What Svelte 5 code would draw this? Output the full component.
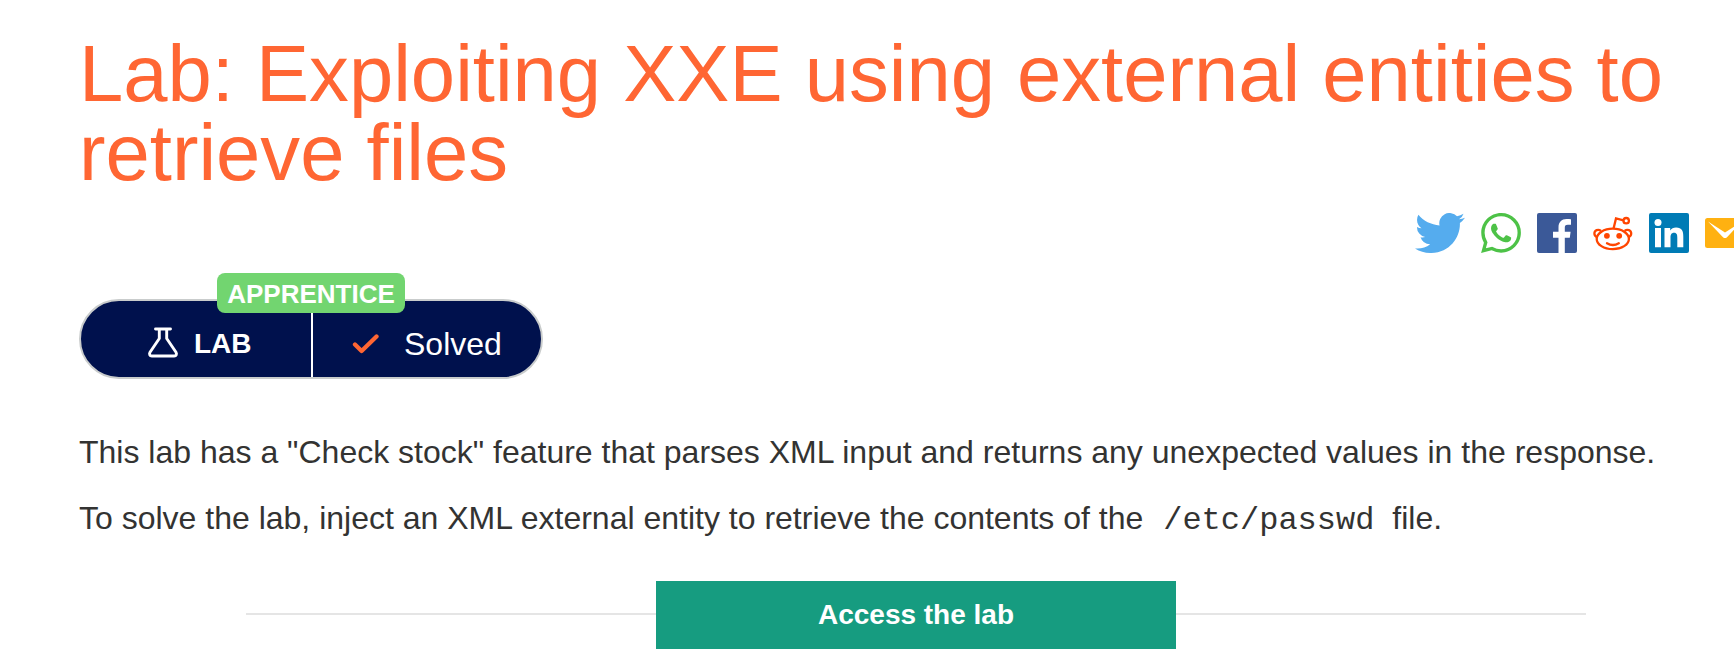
<script>
  const title = 'Lab: Exploiting XXE using external entities to retrieve files';
</script>

<main>
  <h1>{title}</h1>

  <div class="share">
    <svg class="twitter" viewBox="0 2.25 24 19.5" preserveAspectRatio="none" aria-label="Twitter"><path fill="#55acee" d="M23.953 4.57a10 10 0 01-2.825.775 4.958 4.958 0 002.163-2.723c-.951.555-2.005.959-3.127 1.184a4.92 4.92 0 00-8.384 4.482C7.69 8.095 4.067 6.13 1.64 3.162a4.822 4.822 0 00-.666 2.475c0 1.71.87 3.213 2.188 4.096a4.904 4.904 0 01-2.228-.616v.06a4.923 4.923 0 003.946 4.827 4.996 4.996 0 01-2.212.085 4.936 4.936 0 004.604 3.417 9.867 9.867 0 01-6.102 2.105c-.39 0-.779-.023-1.17-.067a13.995 13.995 0 007.557 2.209c9.053 0 13.998-7.496 13.998-13.985 0-.21 0-.42-.015-.63A9.935 9.935 0 0024 4.59z"/></svg>
    <svg viewBox="0 0 24 24" aria-label="WhatsApp"><path fill="#4dc247" d="M17.472 14.382c-.297-.149-1.758-.867-2.03-.967-.273-.099-.471-.148-.67.15-.197.297-.767.966-.94 1.164-.173.199-.347.223-.644.075-.297-.15-1.255-.463-2.39-1.475-.883-.788-1.48-1.761-1.653-2.059-.173-.297-.018-.458.13-.606.134-.133.298-.347.446-.52.149-.174.198-.298.298-.497.099-.198.05-.371-.025-.52-.075-.149-.669-1.612-.916-2.207-.242-.579-.487-.5-.669-.51-.173-.008-.371-.01-.57-.01-.198 0-.52.074-.792.372-.272.297-1.04 1.016-1.04 2.479 0 1.462 1.065 2.875 1.213 3.074.149.198 2.096 3.2 5.077 4.487.709.306 1.262.489 1.694.625.712.227 1.36.195 1.871.118.571-.085 1.758-.719 2.006-1.413.248-.694.248-1.289.173-1.413-.074-.124-.272-.198-.57-.347m-5.421 7.403h-.004a9.87 9.87 0 01-5.031-1.378l-.361-.214-3.741.982.998-3.648-.235-.374a9.86 9.86 0 01-1.51-5.26c.001-5.45 4.436-9.884 9.888-9.884 2.64 0 5.122 1.03 6.988 2.898a9.825 9.825 0 012.893 6.994c-.003 5.45-4.437 9.884-9.885 9.884m8.413-18.297A11.815 11.815 0 0012.05 0C5.495 0 .16 5.335.157 11.892c0 2.096.547 4.142 1.588 5.945L.057 24l6.305-1.654a11.882 11.882 0 005.683 1.448h.005c6.554 0 11.89-5.335 11.893-11.893a11.821 11.821 0 00-3.480-8.413z"/></svg>
    <svg viewBox="0 0 40 40" aria-label="Facebook"><rect width="40" height="40" rx="2" fill="#3b5998"/><path fill="#fff" d="M21.500 40V24.700H16v-6h5.500v-4.200C21.500 9 24.700 6 29.500 6c2 0 3.800.15 4.500.25v5.400h-3.200c-2.500 0-3 1.200-3 2.950v4.100h5.800l-.8 6h-5V40z"/></svg>
    <svg viewBox="0 0 40 40" aria-label="Reddit"><g fill="none" stroke="#ff4500" stroke-width="2.300"><ellipse cx="19.800" cy="25.900" rx="16.100" ry="10.200"/><path d="M20.500 15.700L23 5.400l7.500 1.900M8 18C5.300 15.800 1.400 17.200 1.400 20.500c0 1.700.9 2.900 2.500 3.600M31.600 18c2.700-2.200 6.600-.8 6.600 2.500 0 1.700-.9 2.900-2.500 3.600"/><circle cx="33.200" cy="7.700" r="2.700"/><path stroke-linecap="round" d="M14 30.300c3.400 2 8.400 2 11.800 0"/></g><g fill="#ff4500"><circle cx="13.900" cy="22.800" r="2.900"/><circle cx="26.200" cy="22.800" r="2.900"/></g></svg>
    <svg viewBox="0 0 40 40" aria-label="LinkedIn"><rect width="40" height="40" rx="2" fill="#007bb5"/><g fill="#fff"><circle cx="9" cy="9.500" r="3.500"/><path d="M6 15h6v19.300H6zM15.500 15h5.700v2.600c1.100-1.900 3.200-3.100 5.900-3.100 5.900 0 7.200 3.700 7.200 8.900v10.900h-6v-9.600c0-2.500-.3-4.900-3.200-4.900-3 0-3.600 2.200-3.600 4.800v9.700h-6z"/></g></svg>
    <svg viewBox="0 0 40 40" aria-label="Email"><rect y="5" width="40" height="30" rx="2.500" fill="#ffb111"/><path fill="#fff" d="M3 8.500L20 19.500 37 8.500 22 24.200Q20 26 18 24.200z"/></svg>
  </div>

  <div class="status">
    <span class="level">APPRENTICE</span>
    <div class="kind">
      <svg class="flask" viewBox="0 0 30 31" aria-hidden="true"><g fill="none" stroke="#fff" stroke-width="2.900" stroke-linecap="round" stroke-linejoin="round"><path d="M7.500 2h15M11.300 2v9.500L2 25.300c-1 1.700-.2 3.700 1.800 3.700h22.400c2 0 2.800-2 1.800-3.700L18.700 11.500V2"/></g></svg>
      <b>LAB</b>
    </div>
    <div class="state">
      <svg class="tick" viewBox="0 0 28 22" aria-hidden="true"><path d="M3 11.500l6.600 6.500L24.500 3.500" fill="none" stroke="#f63" stroke-width="4.300" stroke-linecap="round" stroke-linejoin="round"/></svg>
      <span>Solved</span>
    </div>
  </div>

  <p>This lab has a "Check stock" feature that parses XML input and returns any unexpected values in the response.</p>
  <p>To solve the lab, inject an XML external entity to retrieve the contents of the <code>/etc/passwd</code> file.</p>

  <div class="access"><a href="#lab">Access the lab</a></div>
</main>

<style>
  :global(body) { margin: 0; background: #fff; overflow: hidden; }
  main {
    width: 1734px; height: 672px; overflow: hidden; box-sizing: border-box;
    padding: 34px 60px 0 79px; color: #333332;
    font-family: "Liberation Sans", Arial, sans-serif;
  }
  h1 { margin: 0; font-weight: 400; font-size: 79.600px; line-height: 79.200px; color: #f63; }
  .share { display: flex; gap: 16px; width: max-content; margin: 21px 0 0 1336px; }
  .share svg { display: block; width: 40px; height: 40px; flex: none; }
  .share .twitter { width: 50px; }
  .status {
    position: relative; display: flex; box-sizing: border-box; width: 464px; height: 80px;
    margin: 46px 0 0; border: 2px solid #c9cccc; border-radius: 40px;
    background: #00114d; color: #fff;
  }
  .level {
    position: absolute; left: 136px; top: -28px; width: 188px; height: 40px; border-radius: 8px;
    background: #72d570; text-align: center; font: bold 26px/42px "Liberation Sans", Arial, sans-serif;
  }
  .kind, .state { display: flex; align-items: center; box-sizing: border-box; }
  .kind { width: 232px; border-right: 2px solid #fff; padding-left: 67px; gap: 16px; font-size: 28px; }
  .flask { width: 30px; height: 31px; padding-top: 6px; overflow: visible; }
  .kind b { padding-top: 9px; }
  .state { padding-left: 39px; gap: 24px; font-size: 32px; }
  .tick { width: 28px; height: 22px; padding-top: 9px; }
  .state span { padding-top: 10px; }
  p { margin: 0; font-size: 32px; line-height: 36px; padding-bottom: 30px; white-space: nowrap; }
  .status + p { margin-top: 55px; }
  code { font: 32px/36px "Liberation Mono", monospace; padding: 0 9px 0 11px; }
  .access {
    display: flex; align-items: center; width: 1340px; margin: 12px 0 0 167px;
  }
  .access::before, .access::after { content: ""; flex: 1; height: 2px; margin-bottom: 2px; background: #e5e5e5; }
  a {
    width: 520px; height: 68px; background: #169c80; color: #fff; text-align: center; text-decoration: none;
    font-weight: bold; font-size: 28px; line-height: 67px;
  }
</style>
